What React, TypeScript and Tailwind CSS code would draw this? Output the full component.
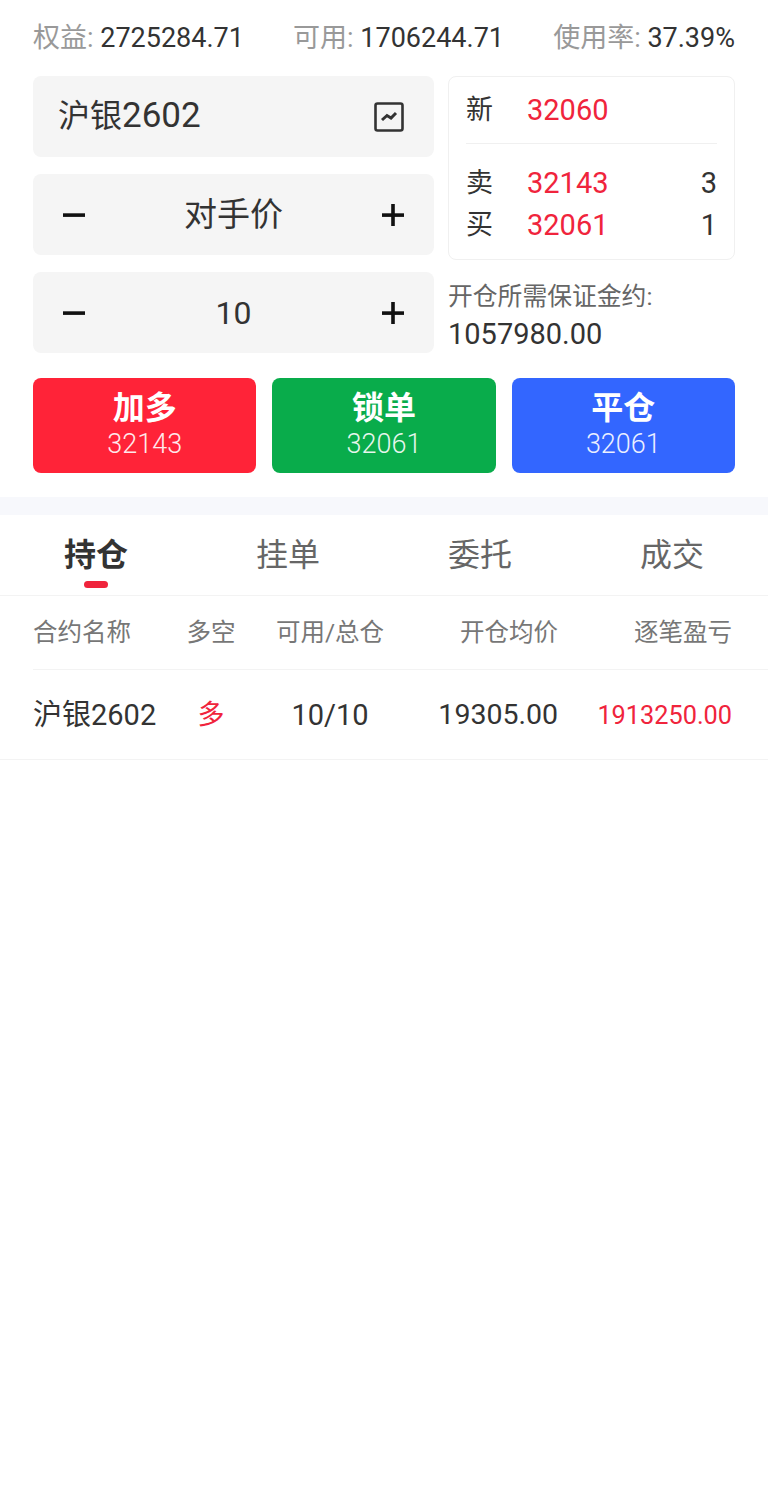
const FONT = "font-['Roboto','Noto_Sans_CJK_SC',sans-serif]";

function Minus() {
  return (
    <svg width="24" height="24" viewBox="0 0 24 24" className="block">
      <rect x="1" y="10.3" width="22" height="3.6" fill="#111" />
    </svg>
  );
}

function Plus() {
  return (
    <svg width="24" height="24" viewBox="0 0 24 24" className="block">
      <rect x="1" y="10.3" width="22" height="3.6" fill="#111" />
      <rect x="10.2" y="1" width="3.6" height="22" fill="#111" />
    </svg>
  );
}

function Stepper({ label, size }: { label: string; size: string }) {
  return (
    <div className="flex h-[81px] items-center justify-between rounded-lg bg-[#f5f5f5] px-[29px]">
      <Minus />
      <span className={`${size} text-[#333]`}>{label}</span>
      <Plus />
    </div>
  );
}

function Quote({ k, v, n }: { k: string; v: string; n?: string }) {
  return (
    <div className="flex h-[42px] items-center">
      <span className="w-[61px] text-[27px] text-[#333]">{k}</span>
      <span className="pt-[2px] text-[29px] text-[#f0243c]">{v}</span>
      {n && <span className="ml-auto pt-[2px] text-[29px] text-[#333]">{n}</span>}
    </div>
  );
}

function Action({ title, price, color }: { title: string; price: string; color: string }) {
  return (
    <div className={`flex h-[95px] flex-1 flex-col items-center justify-center rounded-lg pb-[3px] ${color} text-white`}>
      <span className="text-[32px] font-bold leading-[40px]">{title}</span>
      <span className="text-[27px] font-light leading-[33px] opacity-90">{price}</span>
    </div>
  );
}

export default function App() {
  return (
    <div className={`${FONT} h-[1490px] w-[768px] bg-white`}>
      <div className="flex h-[76px] items-center justify-between px-[33px] text-[27px]">
        <div><span className="text-[#999]">权益: </span><span className="text-[#333]">2725284.71</span></div>
        <div><span className="text-[#999]">可用: </span><span className="text-[#333]">1706244.71</span></div>
        <div><span className="text-[#999]">使用率: </span><span className="text-[#333]">37.39%</span></div>
      </div>

      <div className="flex gap-[14px] px-[33px]">
        <div className="flex w-[401px] flex-col gap-[17px]">
          <div className="flex h-[81px] items-center justify-between rounded-lg bg-[#f5f5f5] pl-[25px] pr-[30px]">
            <span className="text-[32px] text-[#333]">沪银<span className="text-[35px]">2602</span></span>
            <svg width="30" height="30" viewBox="0 0 30 30" fill="none" stroke="#333" className="block">
              <rect x="1.5" y="1.5" width="27" height="27" rx="2" strokeWidth="2.6" />
              <path d="M8 18l5-4.5 4 2.5 5-5" strokeWidth="3" />
            </svg>
          </div>
          <Stepper label="对手价" size="text-[33px]" />
          <Stepper label="10" size="text-[32px]" />
        </div>

        <div className="flex flex-1 flex-col">
          <div className="h-[184px] rounded-lg border border-[#f0f0f0] px-[17px]">
            <div className="flex h-[67px] items-center border-b border-[#f0f0f0]">
              <span className="w-[61px] text-[27px] text-[#333]">新</span>
              <span className="pt-[2px] text-[29px] text-[#f0243c]">32060</span>
            </div>
            <div className="pt-[18px]">
              <Quote k="卖" v="32143" n="3" />
              <Quote k="买" v="32061" n="1" />
            </div>
          </div>
          <div className="pt-[19px] text-[24.8px] leading-[36px] text-[#666]">开仓所需保证金约:</div>
          <div className="text-[29px] leading-[38px] text-[#333]">1057980.00</div>
        </div>
      </div>

      <div className="mt-[25px] flex gap-[16px] px-[33px]">
        <Action title="加多" price="32143" color="bg-[#ff2338]" />
        <Action title="锁单" price="32061" color="bg-[#09ac4b]" />
        <Action title="平仓" price="32061" color="bg-[#3366ff]" />
      </div>

      <div className="mt-[24px] h-[18px] bg-[#f7f8fc]" />

      <div className="grid h-[81px] grid-cols-4 border-b border-[#f3f3f3]">
        {["持仓", "挂单", "委托", "成交"].map((t, i) => (
          <div key={t} className="relative flex items-center justify-center">
            <span className={i === 0 ? "text-[32px] font-bold text-[#333]" : "text-[32px] text-[#666]"}>{t}</span>
            {i === 0 && <span className="absolute bottom-[7px] h-[7px] w-[24px] rounded-full bg-[#f0243c]" />}
          </div>
        ))}
      </div>

      <div className="ml-[33px] flex h-[74px] items-center border-b border-[#f3f3f3] pt-[2px] text-[24.5px] text-[#777]">
        <span className="w-[141px]">合约名称</span>
        <span className="w-[74px] text-center">多空</span>
        <span className="w-[164px] text-center">可用/总仓</span>
        <span className="w-[146px] text-right">开仓均价</span>
        <span className="w-[174px] text-right">逐笔盈亏</span>
      </div>

      <div className="flex h-[90px] items-center border-b border-[#f3f3f3] pl-[33px] pt-[2px]">
        <span className="w-[141px] whitespace-nowrap text-[29px] text-[#333]">沪银2602</span>
        <span className="w-[74px] text-center text-[27px] text-[#f0243c]">多</span>
        <span className="w-[164px] text-center text-[29px] text-[#333]">10/10</span>
        <span className="w-[146px] text-right text-[28.5px] text-[#333]">19305.00</span>
        <span className="w-[174px] text-right text-[25.3px] text-[#f0243c]">1913250.00</span>
      </div>
    </div>
  );
}
